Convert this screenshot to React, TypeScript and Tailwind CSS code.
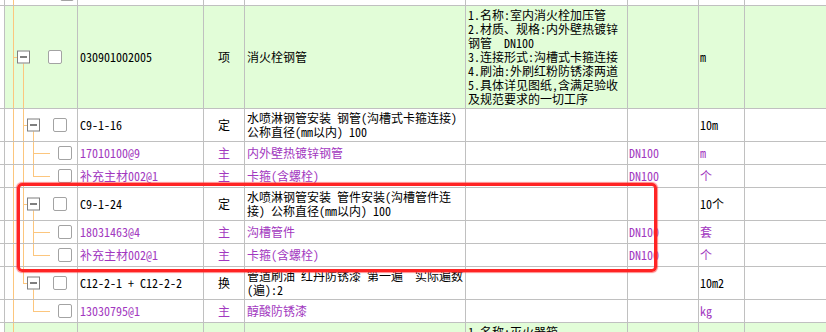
import React from "react";

type VLine = [number, "full" | "top" | "bottom"];

type Tree = {
  v: VLine[];
  h?: [number, number];
  minus?: number;
  cb?: number;
};

type Row = {
  h: string;
  green?: boolean;
  purple?: boolean;
  tree: Tree;
  code?: string;
  type?: string;
  name?: string[];
  desc?: string[];
  descTop?: boolean;
  spec?: string;
  unit?: string;
};

// tree x positions are measured from the inner edge of the tree cell
const L2: Tree = { v: [[8, "full"], [18, "full"], [28, "bottom"]], h: [18, 4], minus: 22, cb: 48 };
const L3: Tree = { v: [[8, "full"], [18, "full"], [28, "full"]], h: [28, 17], cb: 53 };
const L3_LAST: Tree = { v: [[8, "full"], [18, "full"], [28, "top"]], h: [28, 17], cb: 53 };

const ROWS: Row[] = [
  {
    h: "h-[103px]",
    green: true,
    tree: { v: [[8, "full"], [18, "bottom"]], h: [8, 4], minus: 12, cb: 43 },
    code: "030901002005",
    type: "项",
    name: ["消火栓钢管"],
    desc: [
      "1.名称:室内消火栓加压管",
      "2.材质、规格:内外壁热镀锌",
      "钢管  DN100",
      "3.连接形式:沟槽式卡箍连接",
      "4.刷油:外刷红粉防锈漆两道",
      "5.具体详见图纸,含满足验收",
      "及规范要求的一切工序",
    ],
    unit: "m",
  },
  {
    h: "h-[33px]",
    tree: L2,
    code: "C9-1-16",
    type: "定",
    name: ["水喷淋钢管安装 钢管(沟槽式卡箍连接)", "公称直径(mm以内) 100"],
    unit: "10m",
  },
  { h: "h-[23px]", purple: true, tree: L3, code: "17010100@9", type: "主", name: ["内外壁热镀锌钢管"], spec: "DN100", unit: "m" },
  { h: "h-[23px]", purple: true, tree: L3_LAST, code: "补充主材002@1", type: "主", name: ["卡箍(含螺栓)"], spec: "DN100", unit: "个" },
  {
    h: "h-[33px]",
    tree: L2,
    code: "C9-1-24",
    type: "定",
    name: ["水喷淋钢管安装 管件安装(沟槽管件连", "接) 公称直径(mm以内) 100"],
    unit: "10个",
  },
  { h: "h-[23px]", purple: true, tree: L3, code: "18031463@4", type: "主", name: ["沟槽管件"], spec: "DN100", unit: "套" },
  { h: "h-[23px]", purple: true, tree: L3_LAST, code: "补充主材002@1", type: "主", name: ["卡箍(含螺栓)"], spec: "DN100", unit: "个" },
  {
    h: "h-[33px]",
    tree: { v: [[8, "full"], [18, "top"], [28, "bottom"]], h: [18, 4], minus: 22, cb: 48 },
    code: "C12-2-1 + C12-2-2",
    type: "换",
    name: ["管道刷油 红丹防锈漆 第一遍  实际遍数", "(遍):2"],
    unit: "10m2",
  },
  { h: "h-[23px]", purple: true, tree: { v: [[8, "full"], [28, "top"]], h: [28, 17], cb: 53 }, code: "13030795@1", type: "主", name: ["醇酸防锈漆"], unit: "kg" },
  { h: "h-[103px]", green: true, tree: { v: [[8, "full"]] }, desc: ["1.名称:灭火器箱"], descTop: true },
];

const ORANGE = "bg-[#fcc67e]";

function MinusBox({ left }: { left: number }) {
  return (
    <div
      className="absolute top-1/2 -translate-y-1/2 w-[13px] h-[13px] border border-[#7f7f7f] bg-white flex items-center justify-center"
      style={{ left }}
    >
      <div className="w-[7px] h-px bg-black" />
    </div>
  );
}

function Check({ left, top }: { left: number; top?: number }) {
  return (
    <div
      className={`absolute w-[14px] h-[14px] rounded-[2px] border border-[#a3a3a3] bg-white ${top === undefined ? "top-1/2 -translate-y-1/2" : ""}`}
      style={top === undefined ? { left } : { left, top }}
    />
  );
}

function TreeCell({ tree, green }: { tree: Tree; green?: boolean }) {
  return (
    <div className={`relative w-[74px] shrink-0 border-x border-[#c0c0c0] ${green ? "bg-[#e2fdd8]" : ""}`}>
      {tree.v.map(([x, kind]) => (
        <div
          key={x}
          className={`absolute w-px ${ORANGE} ${kind === "full" ? "top-0 bottom-0" : kind === "top" ? "top-0 h-1/2" : "top-1/2 bottom-0"}`}
          style={{ left: x }}
        />
      ))}
      {tree.h && <div className={`absolute top-1/2 h-px ${ORANGE}`} style={{ left: tree.h[0], width: tree.h[1] }} />}
      {tree.minus !== undefined && <MinusBox left={tree.minus} />}
      {tree.cb !== undefined && <Check left={tree.cb} />}
    </div>
  );
}

function Lines({ lines }: { lines?: string[] }) {
  if (!lines) return null;
  return (
    <div className="whitespace-pre leading-[14px]">
      {lines.map((l, i) => (
        <div key={i}>{l}</div>
      ))}
    </div>
  );
}

function TableRow({ row }: { row: Row }) {
  const bg = row.green ? "bg-[#e2fdd8]" : "";
  const cell = `shrink-0 border-r border-[#c0c0c0] flex overflow-hidden ${bg}`;
  return (
    <div className={`flex border-b border-[#c0c0c0] ${row.h} ${row.purple ? "text-[#a238c0]" : "text-black"}`}>
      <div className="w-[4px] shrink-0" />
      <TreeCell tree={row.tree} green={row.green} />
      <div className={`${cell} w-[126px] items-center pl-[2px] whitespace-pre`}>{row.code}</div>
      <div className={`${cell} w-[41px] items-center justify-center`}>{row.type}</div>
      <div className={`${cell} w-[221px] items-center pl-[2px]`}>
        <Lines lines={row.name} />
      </div>
      <div className={`${cell} w-[162px] pl-[2px] ${row.descTop ? "items-start pt-[2px]" : "items-center"}`}>
        <Lines lines={row.desc} />
      </div>
      <div className={`${cell} w-[71px] items-center pl-[1px]`}>{row.spec}</div>
      <div className={`${cell} w-[46px] items-center pl-[1px]`}>{row.unit}</div>
      <div className={`flex-1 ${bg}`} />
    </div>
  );
}

export default function App() {
  return (
    <div className="relative w-[826px] h-[332px] overflow-hidden bg-white text-[12px] leading-[14px] font-[family-name:'Noto_Sans_Mono_CJK_SC','Noto_Sans_CJK_SC',monospace]">
      {/* tail of the row above */}
      <div className="flex h-[6px] border-b border-[#c0c0c0]">
        <div className="w-[4px] shrink-0" />
        <div className="relative w-[74px] shrink-0 border-x border-[#c0c0c0] overflow-hidden">
          <div className={`absolute top-0 bottom-0 left-[8px] w-px ${ORANGE}`} />
          <Check left={55} top={-13} />
        </div>
        <div className="w-[126px] shrink-0 border-r border-[#c0c0c0]" />
        <div className="w-[41px] shrink-0 border-r border-[#c0c0c0]" />
        <div className="w-[221px] shrink-0 border-r border-[#c0c0c0]" />
        <div className="w-[162px] shrink-0 border-r border-[#c0c0c0]" />
        <div className="w-[71px] shrink-0 border-r border-[#c0c0c0]" />
        <div className="w-[46px] shrink-0 border-r border-[#c0c0c0]" />
      </div>
      {ROWS.map((r, i) => (
        <TableRow key={i} row={r} />
      ))}
      {/* annotation frame */}
      <div className="absolute left-[17px] top-[183px] w-[640px] h-[89px] rounded-[5px] border-[3px] border-[#ff2424] shadow-[0_0_1px_1px_rgba(255,60,60,0.6)]" />
    </div>
  );
}
